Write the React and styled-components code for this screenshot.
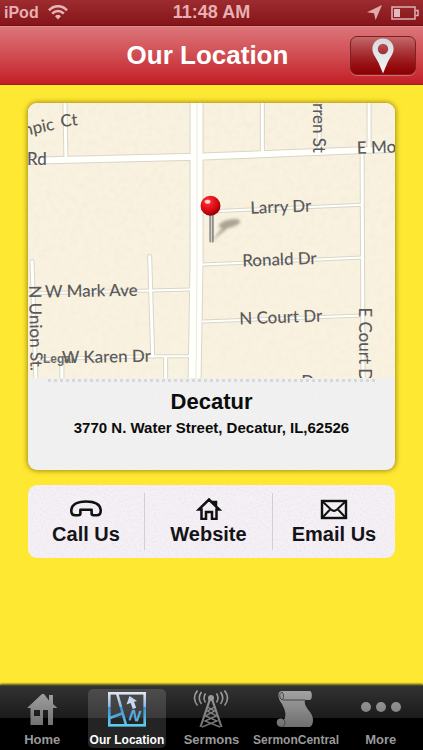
import React, { useState } from "react";
import styled, { createGlobalStyle } from "styled-components";

const App = () => {
  const [active, setActive] = useState("Our Location");

  return (
    <Screen>
      <GlobalStyle />
      <StatusBar>
        <Carrier>
          iPod
          <WifiIcon />
        </Carrier>
        <Clock>11:48 AM</Clock>
        <StatusIcons>
          <ArrowIcon />
          <BatteryIcon />
        </StatusIcons>
      </StatusBar>
      <Header>
        <Title>Our Location</Title>
        <PinButton type="button" aria-label="Show locations">
          <MarkerIcon />
        </PinButton>
      </Header>
      <Content>
        <Card>
          <StreetMap />
          <Details>
            <Place>Decatur</Place>
            <Address>3770 N. Water Street, Decatur, IL,62526</Address>
          </Details>
        </Card>
        <Actions>
          {actions.map((item) => (
            <Action key={item.title} href={item.href}>
              {item.icon}
              {item.title}
            </Action>
          ))}
        </Actions>
      </Content>
      <TabBar>
        {tabs.map((tab) => (
          <Tab
            key={tab.title}
            type="button"
            $active={active === tab.title}
            $small={tab.small}
            onClick={() => setActive(tab.title)}
          >
            {tab.icon}
            <span>{tab.title}</span>
          </Tab>
        ))}
      </TabBar>
    </Screen>
  );
};

export default App;

const WifiIcon = () => (
  <svg width="20" height="15" viewBox="0 0 20 15" fill="none" stroke="#e6b5b7">
    <path d="M1 5.3C6-.1 14-.1 19 5.3" strokeWidth="2.6" />
    <path d="M4.2 8.6c3.4-3.5 8.2-3.5 11.6 0" strokeWidth="2.6" />
    <path d="M7 11.2c1.8-1.8 4.2-1.8 6 0l-3 3.3z" fill="#e6b5b7" stroke="none" />
  </svg>
);

const ArrowIcon = () => (
  <svg width="15" height="15" viewBox="0 0 15 15">
    <path d="M15 0L8.6 15 7 8.2 0 7.2z" fill="#e0a9ab" />
  </svg>
);

const BatteryIcon = () => (
  <svg width="28" height="14" viewBox="0 0 28 14" fill="none">
    <rect x="1" y="1" width="23" height="12" stroke="#e0b0b2" strokeWidth="1.5" />
    <path d="M24.5 4.5H27v5h-2.5" stroke="#e0b0b2" strokeWidth="1.5" />
    <rect x="3" y="3" width="6" height="8" fill="#e3b9bb" />
  </svg>
);

const MarkerIcon = () => (
  <svg width="22" height="36" viewBox="0 0 22 36">
    <defs>
      <linearGradient id="marker" x1="0" y1="0" x2="0" y2="1">
        <stop offset="0" stopColor="#d6dade" />
        <stop offset="1" stopColor="#f3f5f6" />
      </linearGradient>
    </defs>
    <path
      d="M11 .5C5 .5.4 5 .4 11c0 5 3.6 8.4 6 13.5C8.200 28.4 9.6 32 11 35.500c1.400-3.500 2.800-7.100 4.600-11 2.400-5.100 6-8.500 6-13.500C21.600 5 17 .5 11 .5zm0 5.300a5.200 5.200 0 1 1 0 10.400 5.200 5.200 0 0 1 0-10.400z"
      fill="url(#marker)"
      fillRule="evenodd"
    />
  </svg>
);

const roads = [
  { d: "M0 58L168 54L368 46", w: 6 },
  { d: "M169 -2V160L167 280", w: 12 },
  { d: "M37 -2L38 55", w: 3 },
  { d: "M235 -2V50", w: 3 },
  { d: "M292 -2V48", w: 3 },
  { d: "M342 -2V46", w: 3 },
  { d: "M335 49L336 280", w: 3 },
  { d: "M175 109L335 102", w: 2 },
  { d: "M175 162L336 155", w: 2 },
  { d: "M175 219L336 213", w: 2 },
  { d: "M0 191L163 187", w: 2 },
  { d: "M8 257L125 254H162", w: 2 },
  { d: "M122 154L125 254", w: 3 },
  { d: "M4 159L8 280", w: 3 },
  { d: "M34 257V280", w: 3 },
  { d: "M138 255V280", w: 3 },
];

const StreetMap = () => (
  <MapView viewBox="0 0 368 276" role="img" aria-label="Map of Decatur">
    <defs>
      <filter id="grain" x="0" y="0" width="100%" height="100%">
        <feTurbulence type="fractalNoise" baseFrequency=".16" numOctaves="3" />
        <feColorMatrix values="0 0 0 0 .7  0 0 0 0 .58  0 0 0 0 .4  .7 0 0 0 -.28" />
      </filter>
      <filter id="soft" x="-30%" y="-30%" width="160%" height="160%">
        <feGaussianBlur stdDeviation="1.5" />
      </filter>
      <radialGradient id="ball" cx=".38" cy=".3" r=".7">
        <stop offset="0" stopColor="#ffc0c0" />
        <stop offset=".2" stopColor="#f5282d" />
        <stop offset=".7" stopColor="#d3060e" />
        <stop offset="1" stopColor="#8c0006" />
      </radialGradient>
      <linearGradient id="needle">
        <stop offset="0" stopColor="#5c5c5c" />
        <stop offset=".5" stopColor="#d0d0d0" />
        <stop offset="1" stopColor="#4e4e4e" />
      </linearGradient>
    </defs>
    <rect width="368" height="276" fill="#f9f2e0" />
    <rect width="368" height="276" filter="url(#grain)" opacity=".25" />
    <g fill="none" stroke="#d9d5c8" strokeLinecap="round">
      {roads.map((road) => (
        <path key={road.d} d={road.d} strokeWidth={road.w + 2} />
      ))}
    </g>
    <g fill="none" stroke="#fffffc" strokeLinecap="round">
      {roads.map((road) => (
        <path key={road.d} d={road.d} strokeWidth={road.w} />
      ))}
    </g>
    <path d="M169.500 0V160L168.500 276" stroke="#e9e7e1" fill="none" />
    <Street x="-1" y="62">Rd</Street>
    <Street transform="translate(-8 34) rotate(-12)">mpic</Street>
    <Street transform="translate(33 24) rotate(-6)">Ct</Street>
    <Street transform="translate(286 0) rotate(90)">rren St</Street>
    <Street transform="translate(330 51) rotate(-2)">E Mo</Street>
    <Street transform="translate(223 111) rotate(-2)">Larry Dr</Street>
    <Street transform="translate(215 164) rotate(-2)">Ronald Dr</Street>
    <Street transform="translate(212 222) rotate(-2)">N Court Dr</Street>
    <Street transform="translate(17 195) rotate(-1)">W Mark Ave</Street>
    <Street transform="translate(34 261) rotate(-1)">W Karen Dr</Street>
    <Street transform="translate(1 183) rotate(89)">N Union St.</Street>
    <Street transform="translate(332 205) rotate(90)">E Court Dr</Street>
    <Street x="274" y="286">Dr</Street>
    <Legal x="15" y="261">Legal</Legal>
    <g filter="url(#soft)" opacity=".5" fill="#5e5949">
      <ellipse cx="202" cy="121" rx="11" ry="4" transform="rotate(-14 202 121)" />
      <path d="M184 139L198 121l4 3z" />
    </g>
    <rect x="182" y="112" width="4" height="28" rx="1" fill="url(#needle)" />
    <circle cx="183" cy="103" r="10" fill="url(#ball)" />
    <ellipse cx="180" cy="99" rx="3" ry="2" fill="#fff" opacity=".65" />
  </MapView>
);

const PhoneIcon = () => (
  <svg width="34" height="22" viewBox="0 0 34 22">
    <path
      d="M2.300 13C2.300 6.500 8 3.500 17 3.500S31.700 6.500 31.700 13c0 3-1.200 4.300-4 4.300h-3c-1.400 0-2.100-.7-2.100-2v-3.600H11.400v3.600c0 1.300-.7 2-2.100 2h-3c-2.800 0-4-1.300-4-4.300z"
      fill="none"
      stroke="#111"
      strokeWidth="2.600"
      strokeLinejoin="round"
    />
  </svg>
);

const HouseIcon = () => (
  <svg width="26" height="22" viewBox="0 0 26 22" fill="none" stroke="#111">
    <path
      d="M5.500 11.500H2.800L13 1.500l4.500 4.500V4H20v4.500l3.200 3H20.500V21H16v-7h-6v7H5.500z"
      strokeWidth="2.500"
    />
  </svg>
);

const MailIcon = () => (
  <svg width="28" height="22" viewBox="0 0 28 22" fill="none" stroke="#111">
    <rect x="2" y="3" width="24" height="17" strokeWidth="2.400" />
    <path
      d="M2 3l9 8.500c2 1.800 4 1.800 6 0L26 3M2 20l8.500-9M26 20l-8.500-9"
      strokeWidth="2"
    />
  </svg>
);

const Grey = ({ id }) => (
  <defs>
    <linearGradient id={id} x1="0" y1="0" x2="0" y2="40" gradientUnits="userSpaceOnUse">
      <stop offset="0" stopColor="#a5a5a5" />
      <stop offset="1" stopColor="#6c6c6c" />
    </linearGradient>
  </defs>
);

const HomeTabIcon = () => (
  <svg width="40" height="40" viewBox="0 0 40 40">
    <Grey id="grey-home" />
    <path
      d="M20 5L5 19h3.500v17h12.500V21H26v15h5V19h4.500L31 15V6h-4v5.500L22 5zM12 21h6v6h-6z"
      fill="url(#grey-home)"
      fillRule="evenodd"
    />
  </svg>
);

const MapTabIcon = () => (
  <svg width="40" height="40" viewBox="0 0 40 40">
    <defs>
      <linearGradient id="blue" x1="0" y1="3" x2="0" y2="38" gradientUnits="userSpaceOnUse">
        <stop offset="0" stopColor="#e2e8f5" />
        <stop offset=".42" stopColor="#93b4df" />
        <stop offset=".43" stopColor="#3f8fd0" />
        <stop offset="1" stopColor="#62d0f2" />
      </linearGradient>
    </defs>
    <g fill="none" stroke="url(#blue)" strokeWidth="2.600">
      <rect x="2.300" y="4.300" width="35.400" height="32" />
      <path d="M10 4l9 32M3 29l13-5" />
    </g>
    <path d="M19.500 15.500L22.500 7l7.500 5-3 .8 2.200 6-3.400 1.200-2.200-6z" fill="#c6d7ef" />
    <MapLetter x="22" y="32" transform="rotate(8 27 27)">N</MapLetter>
  </svg>
);

const TowerIcon = () => (
  <svg width="40" height="40" viewBox="0 0 40 40" fill="none" stroke="url(#grey-tower)">
    <Grey id="grey-tower" />
    <circle cx="20" cy="9" r="3" fill="#999" stroke="none" />
    <path d="M19 10L9.500 38M21 10l9.500 28" strokeWidth="2.200" />
    <path d="M16.500 18l7 4-9 5 11.500 5-15 6M23.500 18l-7 4 9 5L14 32l15 6" strokeWidth="1.400" />
    <path
      d="M14.500 4.500c-2 3-2 6 0 9M10.500 3c-3 4-3 8 0 12M6.500 1.500c-4 5-4 10 0 15M25.500 4.500c2 3 2 6 0 9M29.500 3c3 4 3 8 0 12M33.500 1.500c4 5 4 10 0 15"
      strokeWidth="1.600"
    />
  </svg>
);

const ScrollIcon = () => (
  <svg width="40" height="40" viewBox="0 0 40 40">
    <Grey id="grey-scroll" />
    <path
      d="M5 2h29c2.500 0 2.500 9 0 9h-5c-2 8 9 12 8 21-.4 4-2 6-4 6H6c-4 0-6-3-5-6 1-3 5-3 7-1 3-5 1-10-2-16C2 10 1 3 5 2z"
      fill="url(#grey-scroll)"
    />
    <path d="M6 3c-3 1-3 6 0 8 2-1 2-6 0-8zM7 11h22M8 31c2 2 1 6-2 7" fill="none" stroke="#444" />
  </svg>
);

const MoreIcon = () => (
  <svg width="40" height="40" viewBox="0 0 40 40" fill="url(#grey-more)">
    <Grey id="grey-more" />
    <circle cx="5" cy="18" r="5" />
    <circle cx="20" cy="18" r="5" />
    <circle cx="35" cy="18" r="5" />
  </svg>
);

const noise = (tint) =>
  `url("data:image/svg+xml,%3Csvg xmlns='http://www.w3.org/2000/svg' width='160' height='160'%3E%3Cfilter id='n' x='0' y='0' width='100%25' height='100%25'%3E%3CfeTurbulence type='fractalNoise' baseFrequency='.5' numOctaves='2' stitchTiles='stitch'/%3E%3CfeColorMatrix values='0 0 0 0 ${tint} 0 0 0 0 ${tint} 0 0 0 0 ${tint} 2 0 0 0 -.9'/%3E%3C/filter%3E%3Crect width='160' height='160' filter='url(%23n)' opacity='.3'/%3E%3C/svg%3E")`;

const GlobalStyle = createGlobalStyle`
  * {
    box-sizing: border-box;
  }
  body {
    margin: 0;
    background: #ffe832;
    font-family: "Liberation Sans", Arial, sans-serif;
  }
`;
const Screen = styled.div`
  min-height: 100vh;
  display: flex;
  flex-direction: column;
`;
const StatusBar = styled.div`
  display: grid;
  grid-template-columns: 1fr auto 1fr;
  align-items: center;
  height: 26px;
  padding: 0 4px;
  background: linear-gradient(#9c2c30, #86151a);
  border-bottom: 1px solid #701015;
  color: #e6b0b3;
  font-weight: bold;
`;
const Carrier = styled.div`
  display: flex;
  align-items: center;
  gap: 9px;
  font-size: 16px;
`;
const Clock = styled.div`
  font-size: 18px;
`;
const StatusIcons = styled.div`
  display: flex;
  align-items: center;
  justify-content: flex-end;
  gap: 9px;
`;
const Header = styled.header`
  display: grid;
  grid-template-columns: 58px 1fr 66px;
  align-items: center;
  height: 59px;
  padding: 0 7px;
  background: linear-gradient(#dc7579, #d04c51 50%, #c31f27);
  border-top: 1px solid #e58d90;
  border-bottom: 1px solid #8e2413;
`;
const Title = styled.h1`
  grid-column: 2;
  margin: 0;
  padding-bottom: 2px;
  text-align: center;
  color: white;
  font-size: 26px;
  line-height: 32px;
`;
const PinButton = styled.button`
  display: flex;
  align-items: center;
  justify-content: center;
  height: 39px;
  padding: 0;
  border: 1px solid #7d2023;
  border-radius: 7px;
  background: linear-gradient(#c4696b, #a83538 40%, #960f12 75%, #8e0002);
  box-shadow: 0 1px 0 #d9686b;
`;
const Content = styled.main`
  flex: 1;
  display: flex;
  flex-direction: column;
  gap: 15px;
  padding: 18px 28px;
`;
const Card = styled.section`
  overflow: hidden;
  border-radius: 9px;
  background: #f1f1f1 ${noise(0.75)};
  box-shadow: 0 0 5px 1px rgba(110, 95, 0, 0.65);
`;
const MapView = styled.svg`
  display: block;
  width: 100%;
`;
const Street = styled.text`
  fill: #5b5a58;
  font-family: Lato, "Open Sans", sans-serif;
  font-size: 17px;
  font-weight: 500;
`;
const Legal = styled.text`
  fill: #6a6a68;
  font-size: 12px;
  font-weight: bold;
`;
const MapLetter = styled.text`
  fill: #55b0e2;
  font-size: 16px;
  font-weight: bold;
  font-style: italic;
`;
const Details = styled.div`
  height: 92px;
  text-align: center;
  color: #0c0c0c;

  &::before {
    content: "";
    display: block;
    margin: 0 20px;
    padding-top: 1px;
    border-bottom: 3px dotted #d8d8d8;
  }
`;
const Place = styled.h2`
  margin: 0;
  padding-top: 6px;
  font-size: 22px;
  line-height: 28px;
`;
const Address = styled.p`
  margin: 0;
  font-size: 15px;
  font-weight: bold;
  line-height: 24px;
`;
const Actions = styled.nav`
  display: grid;
  grid-template-columns: 116px 1fr 123px;
  height: 73px;
  border-radius: 9px;
  background: #f5eff6 ${noise(0.6)};
`;
const Action = styled.a`
  display: flex;
  flex-direction: column;
  align-items: center;
  gap: 2px;
  margin: 8px 0;
  padding-top: 5px;
  color: #141416;
  font-size: 20px;
  font-weight: bold;
  line-height: 24px;
  text-decoration: none;

  & + & {
    border-left: 1px solid #d3ced6;
  }
`;
const TabBar = styled.nav`
  display: grid;
  grid-template-columns: repeat(5, minmax(0, 1fr));
  height: 65px;
  padding: 3px 0;
  border-top: 1px solid #4a4a44;
  background: linear-gradient(#323232, #1b1b1b 32px, #000 32px);
  box-shadow: 0 -1px 2px #4b4400;
`;
const Tab = styled.button`
  display: flex;
  flex-direction: column;
  align-items: center;
  gap: 3px;
  margin: 0 3px;
  padding: 0;
  border: none;
  border-radius: 5px;
  background: ${({ $active }) => ($active ? "rgba(255, 255, 255, 0.14)" : "none")};
  color: ${({ $active }) => ($active ? "white" : "#999")};
  font-family: inherit;
  font-size: ${({ $small }) => ($small ? "12px" : "13px")};
  font-weight: bold;
  line-height: 16px;
  white-space: nowrap;
`;

const actions = [
  { title: "Call Us", href: "#call", icon: <PhoneIcon /> },
  { title: "Website", href: "#website", icon: <HouseIcon /> },
  { title: "Email Us", href: "#email", icon: <MailIcon /> },
];

const tabs = [
  { title: "Home", icon: <HomeTabIcon /> },
  { title: "Our Location", icon: <MapTabIcon />, small: true },
  { title: "Sermons", icon: <TowerIcon /> },
  { title: "SermonCentral", icon: <ScrollIcon />, small: true },
  { title: "More", icon: <MoreIcon /> },
];
